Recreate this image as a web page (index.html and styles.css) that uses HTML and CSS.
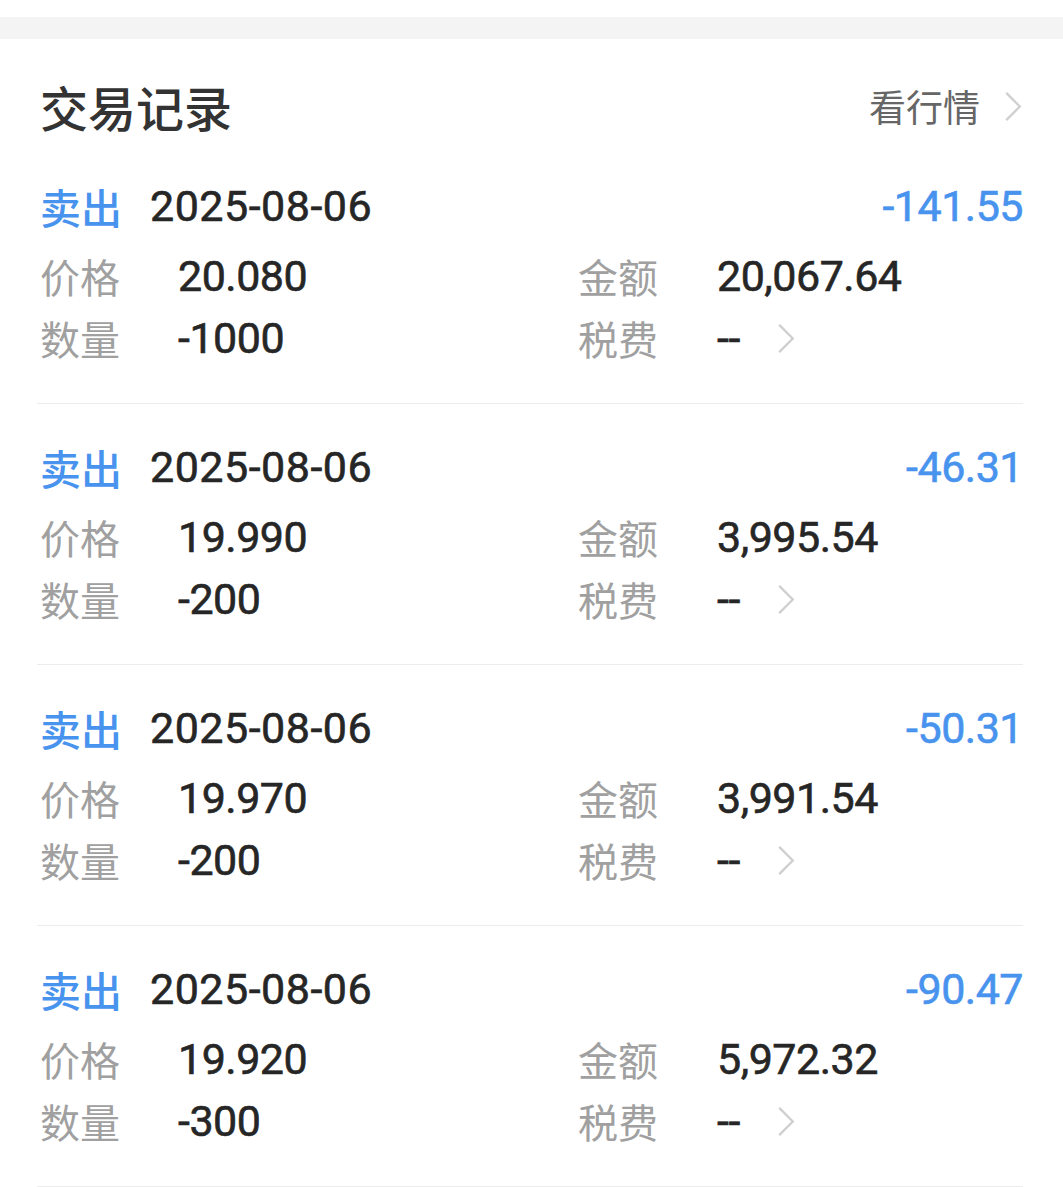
FILE: index.html
```html
<!DOCTYPE html>
<html lang="zh-CN">
<head>
    <meta charset="UTF-8">
    <meta name="viewport" content="width=device-width, initial-scale=1.0">
    <title>交易记录</title>
    <link rel="stylesheet" href="styles.css">
</head>
<body>
    <div class="top-gap"></div>
    <div class="card">
        <div class="card-header">
            <h1 class="title">交易记录</h1>
            <div class="more">看行情<svg class="chevron" viewBox="0 0 18 32"><polyline points="2,2 16,16 2,30"/></svg></div>
        </div>

        <div class="records">
            <div class="record">
                <div class="record-head">
                    <span class="side">卖出</span>
                    <span class="date">2025-08-06</span>
                    <span class="change">-141.55</span>
                </div>
                <div class="record-grid">
                    <span class="label">价格</span><span class="value">20.080</span>
                    <span class="label">金额</span><span class="value">20,067.64</span>
                    <span class="label">数量</span><span class="value">-1000</span>
                    <span class="label">税费</span><span class="value fee">--<svg class="chevron" viewBox="0 0 18 32"><polyline points="2,2 16,16 2,30"/></svg></span>
                </div>
            </div>

            <div class="record">
                <div class="record-head">
                    <span class="side">卖出</span>
                    <span class="date">2025-08-06</span>
                    <span class="change">-46.31</span>
                </div>
                <div class="record-grid">
                    <span class="label">价格</span><span class="value">19.990</span>
                    <span class="label">金额</span><span class="value">3,995.54</span>
                    <span class="label">数量</span><span class="value">-200</span>
                    <span class="label">税费</span><span class="value fee">--<svg class="chevron" viewBox="0 0 18 32"><polyline points="2,2 16,16 2,30"/></svg></span>
                </div>
            </div>

            <div class="record">
                <div class="record-head">
                    <span class="side">卖出</span>
                    <span class="date">2025-08-06</span>
                    <span class="change">-50.31</span>
                </div>
                <div class="record-grid">
                    <span class="label">价格</span><span class="value">19.970</span>
                    <span class="label">金额</span><span class="value">3,991.54</span>
                    <span class="label">数量</span><span class="value">-200</span>
                    <span class="label">税费</span><span class="value fee">--<svg class="chevron" viewBox="0 0 18 32"><polyline points="2,2 16,16 2,30"/></svg></span>
                </div>
            </div>

            <div class="record">
                <div class="record-head">
                    <span class="side">卖出</span>
                    <span class="date">2025-08-06</span>
                    <span class="change">-90.47</span>
                </div>
                <div class="record-grid">
                    <span class="label">价格</span><span class="value">19.920</span>
                    <span class="label">金额</span><span class="value">5,972.32</span>
                    <span class="label">数量</span><span class="value">-300</span>
                    <span class="label">税费</span><span class="value fee">--<svg class="chevron" viewBox="0 0 18 32"><polyline points="2,2 16,16 2,30"/></svg></span>
                </div>
            </div>
        </div>
    </div>
</body>
</html>
```

FILE: styles.css
```css
body { margin: 0; background: #fff; font-family: "Noto Sans CJK SC", "Noto Sans", sans-serif; color: #222; }
.top-gap { margin-top: 17px; height: 22px; background: #f4f4f4; }
.card { background: #fff; }

.card-header { display: flex; justify-content: space-between; align-items: center; height: 50px; padding: 42px 41px 12px 40px; }
.title { margin: 0; font-size: 48px; font-weight: 500; color: #333; line-height: 50px; }
.more { display: flex; align-items: center; font-size: 37px; color: #666; line-height: 50px; }
.more .chevron { margin-left: 24px; }

.chevron { width: 18px; height: 31px; fill: none; stroke: #cfcfcf; stroke-width: 2.4; }

.records { padding: 0 40px 0 37px; }
.record { padding: 38px 0 34px 3px; border-bottom: 1px solid #ececec; }
.record-head { display: flex; align-items: center; height: 50px; }
.side { font-size: 41px; font-weight: 500; color: #4893ee; margin-right: 28px; line-height: 50px; }
.date, .change, .value { font-family: Roboto, "Noto Sans CJK SC", sans-serif; font-size: 43px; font-weight: 400; letter-spacing: -0.5px; line-height: 50px; -webkit-text-stroke: 0.6px currentColor; }
.date { color: #262626; letter-spacing: 0.5px; }
.change { margin-left: auto; color: #4893ee; }

.record-grid { display: grid; grid-template-columns: 138px 400px 139px auto; grid-auto-rows: 62px; align-items: center; margin-top: 14px; }
.label { font-size: 40px; color: #a0a0a0; line-height: 62px; }
.value { color: #262626; }
.fee { display: flex; align-items: center; }
.fee .chevron { margin-left: 37px; }
```
